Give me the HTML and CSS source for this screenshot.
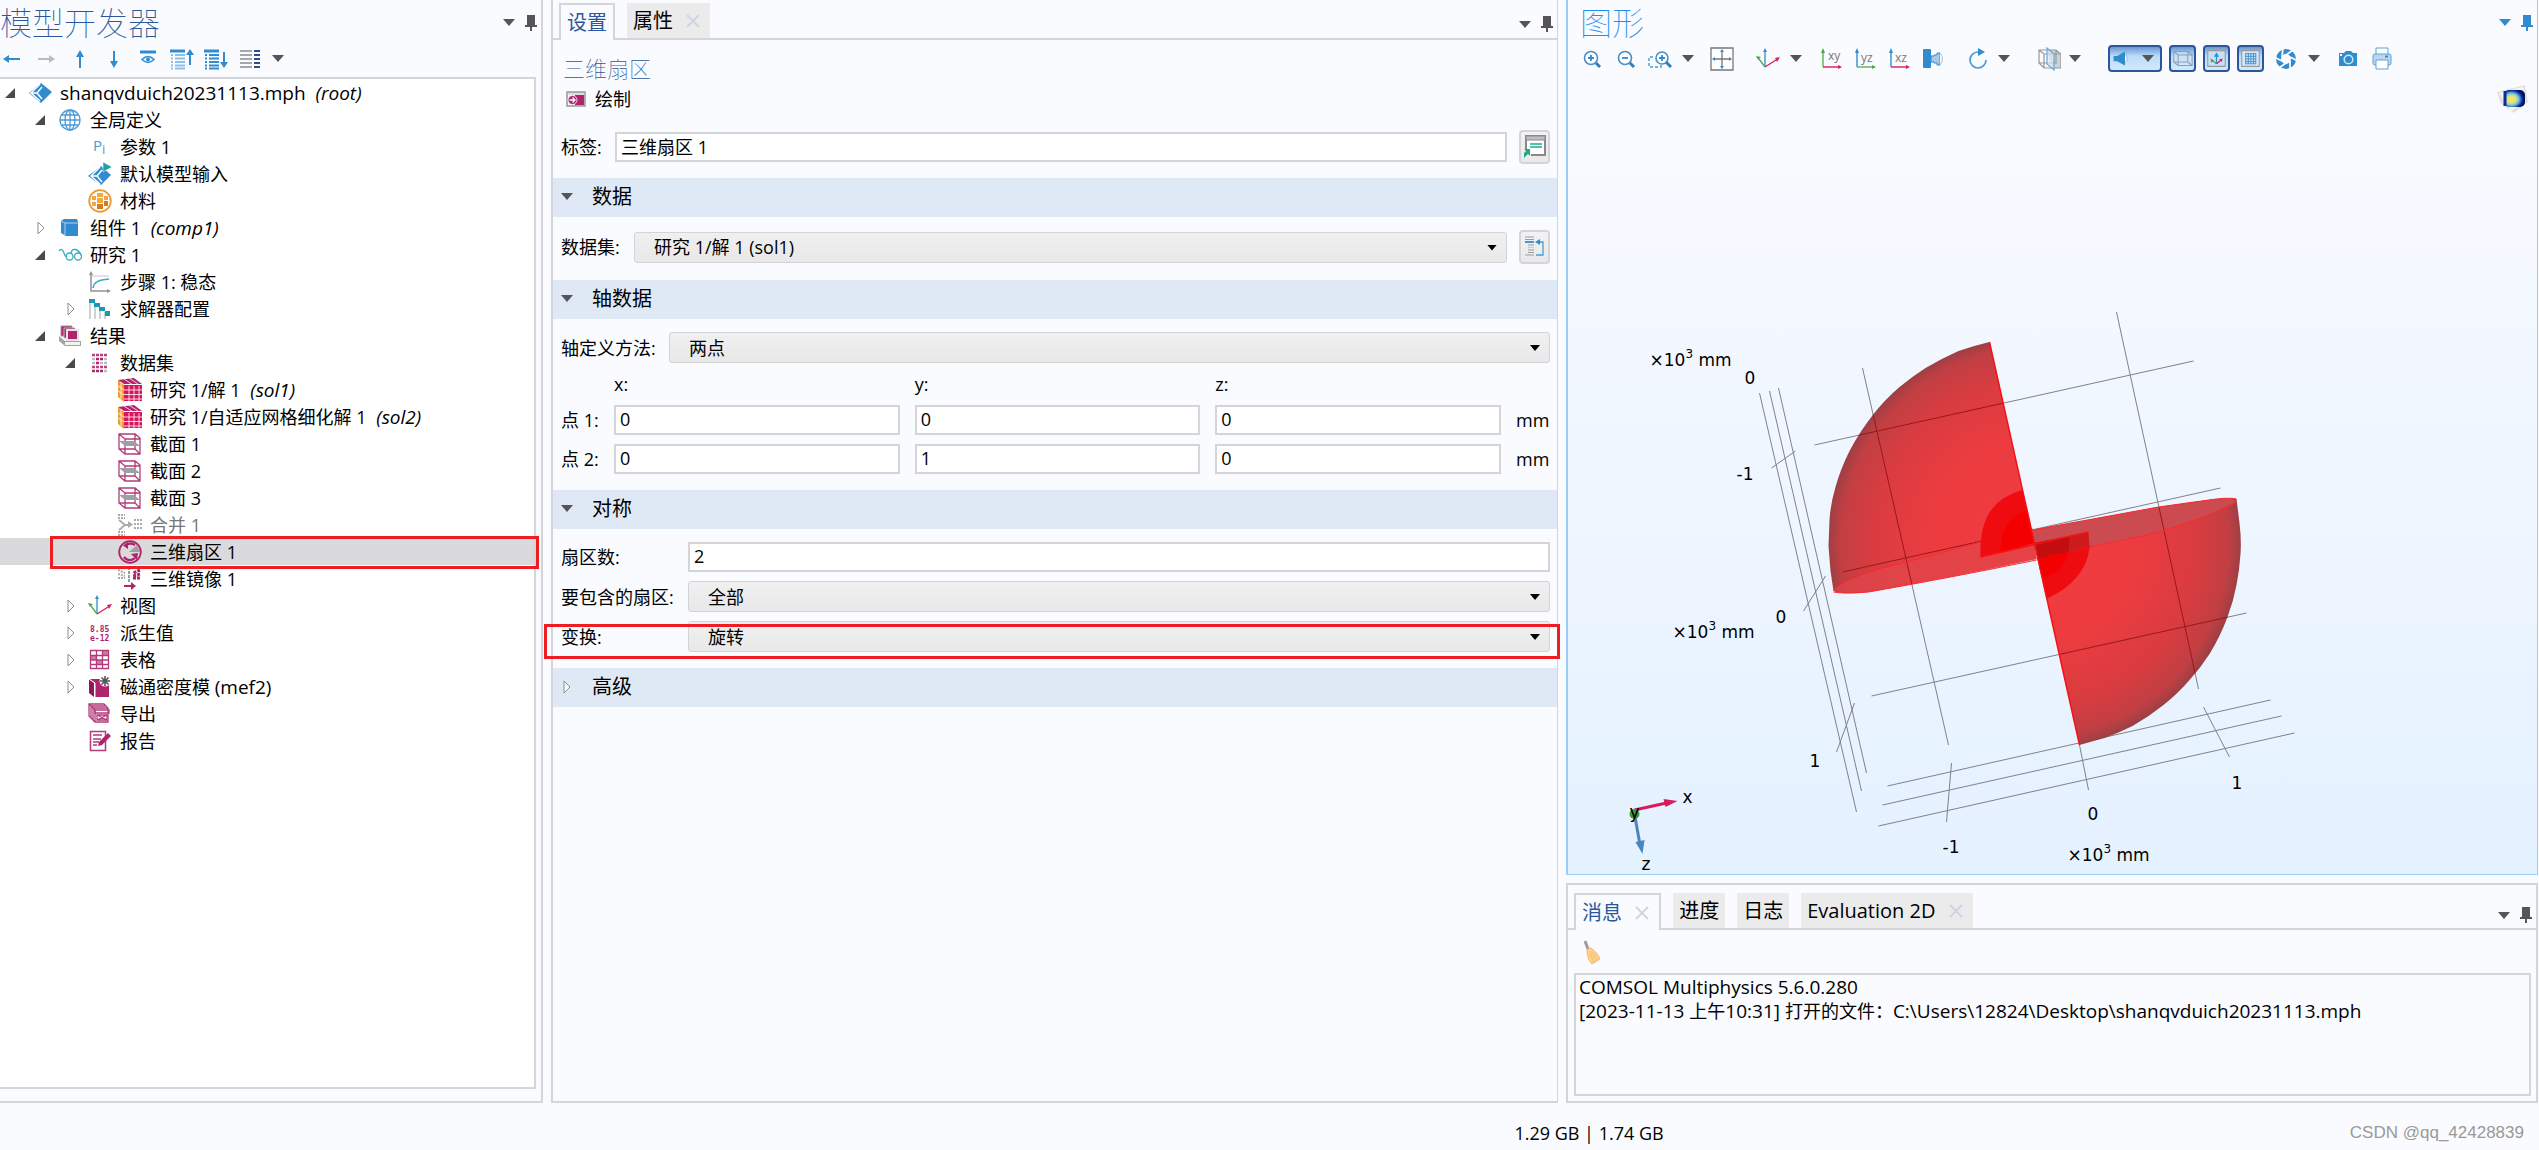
FILE: index.html
```html
<!DOCTYPE html>
<html lang="zh-CN">
<head>
<meta charset="utf-8">
<title>COMSOL Multiphysics</title>
<link rel="stylesheet" href="styles.css">
</head>
<body>
<svg class="sprite" aria-hidden="true">
  <defs>
    <symbol id="pin" viewBox="0 0 12 16"><path d="M2 0h8v10h2v2H7v4H5v-4H0v-2h2z" fill="currentColor"/></symbol>
    <symbol id="caret" viewBox="0 0 12 7"><path d="M0 0h12L6 7z" fill="currentColor"/></symbol>
    <symbol id="close" viewBox="0 0 14 14"><path d="M1 1l12 12M13 1L1 13" stroke="currentColor" stroke-width="2" fill="none"/></symbol>
    <symbol id="open" viewBox="0 0 10 10"><path d="M10 0v10H0z" fill="#4a4a4a"/></symbol>
    <symbol id="shut" viewBox="0 0 8 14"><path d="M1 1v12l6-6z" fill="#fff" stroke="#8c8c8c" stroke-width="1"/></symbol>

    <symbol id="t-back" viewBox="0 0 24 24"><path d="M5 12h15" stroke="#318ccf" stroke-width="2"/><path d="M3 12l6-4v8z" fill="#318ccf"/></symbol>
    <symbol id="t-fwd" viewBox="0 0 24 24"><path d="M4 12h13" stroke="#b9bbbf" stroke-width="2"/><path d="M21 12l-6-4v8z" fill="#b9bbbf"/></symbol>
    <symbol id="t-up" viewBox="0 0 24 24"><path d="M12 6v15" stroke="#318ccf" stroke-width="2"/><path d="M12 3l4 7H8z" fill="#318ccf"/></symbol>
    <symbol id="t-down" viewBox="0 0 24 24"><path d="M12 4v14" stroke="#318ccf" stroke-width="2"/><path d="M12 21l4-7H8z" fill="#318ccf"/></symbol>
    <symbol id="t-eye" viewBox="0 0 24 24"><path d="M4 5h16" stroke="#318ccf" stroke-width="3"/><path d="M6 12.500q6-6 12 0q-6 6-12 0z" fill="none" stroke="#318ccf" stroke-width="1.500"/><circle cx="12" cy="12.500" r="2" fill="#318ccf"/></symbol>
    <symbol id="t-listup" viewBox="0 0 24 24"><path d="M0 4h15" stroke="#318ccf" stroke-width="3"/><path d="M1 8h2m2 0h10M1 11.500h2m2 0h10M1 15h2m2 0h10M1 18.500h2m2 0h10M1 21.500h2m2 0h10" stroke="#8dc0e6" stroke-width="2"/><path d="M20 6v12" stroke="#318ccf" stroke-width="2"/><path d="M20 2l4 6h-8z" fill="#318ccf"/></symbol>
    <symbol id="t-listdown" viewBox="0 0 24 24"><path d="M0 4h15" stroke="#318ccf" stroke-width="3"/><path d="M1 8h2m2 0h10M1 11.500h2m2 0h10M1 15h2m2 0h10M1 18.500h2m2 0h10M1 21.500h2m2 0h10" stroke="#318ccf" stroke-width="2"/><path d="M20 5v12" stroke="#318ccf" stroke-width="2"/><path d="M20 21l4-6h-8z" fill="#318ccf"/></symbol>
    <symbol id="t-cols" viewBox="0 0 24 24"><path d="M2 4h12M2 8h12M2 12h12M2 16h12M2 20h12" stroke="#a5a7ab" stroke-width="2"/><path d="M16 4h6M16 8h6M16 12h6M16 16h6M16 20h6" stroke="#2c4f86" stroke-width="2"/></symbol>

    <symbol id="i-root" viewBox="0 0 24 24"><path d="M13 2l11 9-11 11L1 12z" fill="#318ccf"/><path d="M12 3L3 12l9 8M3 12h6l5-6M9 12l5 6" fill="none" stroke="#fff" stroke-width="1.500"/></symbol>
    <symbol id="i-globe" viewBox="0 0 24 24"><g fill="none" stroke="#4b9ad5" stroke-width="1.300"><circle cx="12" cy="12" r="10"/><ellipse cx="12" cy="12" rx="5" ry="10"/><path d="M12 2v20M2 12h20M4 7h16M4 17h16"/></g></symbol>
    <symbol id="i-pi" viewBox="0 0 24 24"><text x="5" y="16" font-size="15" font-family="Open Sans, sans-serif" fill="#4b9ad5">P</text><text x="14" y="19" font-size="13" font-family="Open Sans, sans-serif" fill="#4b9ad5">i</text></symbol>
    <symbol id="i-input" viewBox="0 0 24 24"><path d="M13 4l10 9-10 10L0 14z" fill="#318ccf"/><path d="M12 5l-9 9 9 8M3 14h6l5-6M9 14l5 6" fill="none" stroke="#fff" stroke-width="1.500"/><path d="M15 0l9 5-9 5z" fill="#1fa1a8" stroke="#fff" stroke-width=".5"/></symbol>
    <symbol id="i-mat" viewBox="0 0 24 24"><circle cx="12" cy="12" r="10.800" fill="#fffaf2" stroke="#eb9c3a" stroke-width="1.800"/><path d="M9 4h6v4H9zM4 7h4v4H4zM16 7h4v4h-4zM9 9h6v5H9zM4 13h4v4H4z" fill="#f2a645"/><path d="M16 12h4v5h-4zM9 15h6v5H9z" fill="#cf7d1e"/></symbol>
    <symbol id="i-comp" viewBox="0 0 24 24"><path d="M3 5l3-2h13l1 3v14H8l-5-3z" fill="#318ccf"/><path d="M3 5l4 2h13M7 7v12" stroke="#a9d0ef" stroke-width="1" fill="none"/></symbol>
    <symbol id="i-study" viewBox="0 0 24 24"><g fill="none" stroke="#35aebf" stroke-width="1.300"><path d="M1 8c2-3 4-1 5 2s2 4 3 3"/><circle cx="11.500" cy="13.500" r="3.500"/><circle cx="20" cy="13.500" r="3.500"/><path d="M13 10c1-5 7-5 10 2"/></g></symbol>
    <symbol id="i-step" viewBox="0 0 24 24"><path d="M3 3v18h18" stroke="#8f9195" stroke-width="1.500" fill="none"/><path d="M3 1l2 4H1zM23 21l-4-2v4z" fill="#8f9195"/><path d="M3 6h18" stroke="#c5c7ca" stroke-width="1"/><path d="M5 18c1-6 5-8 16-9" stroke="#35aebf" stroke-width="1.500" fill="none"/></symbol>
    <symbol id="i-solver" viewBox="0 0 24 24"><path d="M2 6v16M7 6v16M12 11v11M17 15v7" stroke="#c0c2c5" stroke-width="1.500"/><path d="M1 2h6v4H1zM6 6h6v4H6zM11 10h6v4h-6zM17 14h5v5h-5z" fill="#1b98b5"/></symbol>
    <symbol id="i-results" viewBox="0 0 24 24"><path d="M3 2h11v10H3z" fill="#b0246b" stroke="#9a9a9a"/><path d="M6 4h11v10H6z" fill="#b0246b" stroke="#b9b9b9"/><path d="M9 6h11v10H9z" fill="#b0246b" stroke="#e4e4e4" stroke-width="2"/><path d="M1 12l6 5h16v5H7l-6-5z" fill="#a2a4a6"/><path d="M7 18h15v3H7z" fill="#f2f2f2"/></symbol>
    <symbol id="i-data" viewBox="0 0 24 24"><g stroke-width="2.500" fill="none"><path d="M4 4h3m1 0h3m1 0h3m1 0h3M4 16h3m1 0h3m1 0h3m1 0h3" stroke="#b3447f"/><path d="M8 8h3m1 0h3M8 12h3M4 20h3m1 0h3m1 0h3" stroke="#b0246b"/><path d="M4 8h3m9 0h3M4 12h3m5 0h3m1 0h3M16 20h3" stroke="#b9bbbd"/></g></symbol>
    <symbol id="i-sol" viewBox="0 0 24 24"><path d="M0 2l6 5v17l-6-5z" fill="#f39a2c"/><path d="M0 2l16-2 8 6H6z" fill="#b0246b"/><path d="M6 7h18v16H6z" fill="#d8145c"/><path d="M0 8l6 4M0 13l6 4M3 4v17M11 8v15M16 8v15M21 8v15M6 12h18M6 16.500h18M6 21h18M6 1l9 6M11 0l9 6" stroke="#fff" stroke-width=".8"/></symbol>
    <symbol id="i-cut" viewBox="0 0 24 24"><g fill="none" stroke="#b23c7b" stroke-width="1.300"><path d="M1 2h16l5 4v16H7l-6-5zM1 2l6 5M17 2v15M7 7h15M7 7v15M1 17h16l5 5"/></g><path d="M1 9h15l6 5H7z" fill="#9ea0a2"/></symbol>
    <symbol id="i-join" viewBox="0 0 24 24"><path d="M0 2h7M0 5h7M0 19h7M0 22h7M16 7h8M16 11h8M16 15h8" stroke="#a9abad" stroke-width="2" stroke-dasharray="2 1"/><path d="M1 7l6 5h4M1 17l6-5" stroke="#a9abad" stroke-width="1.800" fill="none"/><path d="M15 11.500l-5-3.500v7z" fill="#a9abad"/></symbol>
    <symbol id="i-sector" viewBox="0 0 24 24"><circle cx="12" cy="12" r="10.800" fill="none" stroke="#b0246b" stroke-width="1.800"/><path d="M11 12l8-7 3 7z" fill="#9ea0a2"/><path d="M17 5a8 8 0 0 0-9 0M6 17c3 4 8 4 11 1" fill="none" stroke="#b0246b" stroke-width="2.400"/><path d="M10 2v7L5 5.500zM13 14l7-1-1 7z" fill="#b0246b"/></symbol>
    <symbol id="i-mirror" viewBox="0 0 24 24"><path d="M0 3l7 3M0 7l7 2M0 11h7" stroke="#a9abad" stroke-width="2" stroke-dasharray="2 1"/><path d="M11 0v15" stroke="#77797b" stroke-width="1.500" stroke-dasharray="3 1"/><path d="M22 3l-7 3M22 7l-7 2M22 11h-7" stroke="#b0246b" stroke-width="3" stroke-dasharray="3 1"/><path d="M6 19h8" stroke="#b0246b" stroke-width="2"/><path d="M18 19l-5-4v8z" fill="#b0246b"/></symbol>
    <symbol id="i-view" viewBox="0 0 24 24"><g fill="none" stroke-width="1.300"><path d="M9 20V4" stroke="#318ccf"/><path d="M9 20l11-7" stroke="#d81b5c"/><path d="M9 20L3 12" stroke="#4aa84a"/></g><path d="M9 1l2 4H7z" fill="#318ccf"/><path d="M24 10l-5 1 2 4z" fill="#d81b5c"/><path d="M0 9l5 1-3 3z" fill="#4aa84a"/></symbol>
    <symbol id="i-derived" viewBox="0 0 24 24"><text x="2" y="11" font-size="8" font-weight="bold" font-family="DejaVu Sans Mono, monospace" fill="#b0246b">8.85</text><text x="2" y="20" font-size="8" font-weight="bold" font-family="DejaVu Sans Mono, monospace" fill="#b0246b">e-12</text></symbol>
    <symbol id="i-table" viewBox="0 0 24 24"><path d="M15 3h6v5h-6zM3 8h6v4H3zM9 12h6v5H9z" fill="#cf7ba5"/><path d="M2.500 2.500h18v18h-18zM2.500 7.500h18M2.500 12h18M2.500 16.500h18M8.500 2.500v18M14.500 2.500v18" fill="none" stroke="#b23c7b" stroke-width="1.300"/></symbol>
    <symbol id="i-flux" viewBox="0 0 24 24"><path d="M1 4l5 4v14l-5-4z" fill="#8c1b55"/><path d="M1 4h12l2 4h6v14H7V8z" fill="#b0246b"/><path d="M1 4l6 4v14" fill="none" stroke="#fff"/><circle cx="17" cy="6" r="5.500" fill="#fff"/><path d="M17 1v10M12 6h10M13.500 2.500l7 7M20.500 2.500l-7 7" stroke="#555" stroke-width="1.600"/></symbol>
    <symbol id="i-export" viewBox="0 0 24 24"><g fill="none" stroke="#b23c7b" stroke-width="1.300"><path d="M1 2h15l4 4v14H7l-6-6zM3 4h14M5 6h15M1 2l6 6v12M3 4v12M5 6v12"/><path d="M7 8h14v3H7zM9 13l10 5M9 18l10-5M9 13h10v5H9z"/></g></symbol>
    <symbol id="i-report" viewBox="0 0 24 24"><path d="M2.500 2.500h15v19h-15z" fill="#fff" stroke="#b23c7b" stroke-width="1.500"/><path d="M5 6h9M5 10h8M5 13h6M5 16h4" stroke="#b23c7b" stroke-width="1.300"/><path d="M20 4l3 3-9 9-4 1 1-4z" fill="#b0246b"/></symbol>

    <symbol id="i-plot" viewBox="0 0 20 16"><path d="M1 1h18v14H1z" fill="#ddd" stroke="#97999b" stroke-width="1.500"/><path d="M2 4h16v10H2z" fill="#fff"/><path d="M9 4h9v10H9z" fill="#b0246b"/><circle cx="6.500" cy="9" r="4.500" fill="#b0246b" stroke="#fff" stroke-width=".8"/><path d="M3.500 9h5M6.500 6.500L9 9l-2.500 2.500" stroke="#fff" fill="none" stroke-width="1.300"/></symbol>
    <symbol id="i-goto" viewBox="0 0 24 24"><path d="M3 2h19v19H3z" fill="#fff" stroke="#88898d" stroke-width="2"/><path d="M3 2h19v4H3z" fill="#bfc0c4" stroke="#88898d"/><path d="M7 10h12M7 13h12" stroke="#1fa88c" stroke-width="1.600"/><path d="M0 15h8v8H0z" fill="#f2f2f2"/><path d="M1 15h6v7l-2-2-4 4v-5l2-2z" fill="#1fa88c"/></symbol>
    <symbol id="i-source" viewBox="0 0 24 24"><path d="M2 3h9M2 5.500h9M5 11h6M5 16h6M5 18.500h6M2 21h9" stroke="#9b9da0" stroke-width="1.200"/><path d="M2 8h9" stroke="#318ccf" stroke-width="1.800"/><path d="M5 13.500h6" stroke="#ccc" stroke-width="1.200"/><path d="M14 8h6v13h-7" fill="none" stroke="#4b9ad5" stroke-width="1.300"/><path d="M12 8l5-3v6z" fill="#318ccf"/></symbol>

    <symbol id="g-in" viewBox="0 0 24 24"><circle cx="11" cy="11" r="6.500" fill="#fff" stroke="#4b8fc9" stroke-width="1.600"/><path d="M8 11h6M11 8v6" stroke="#318ccf" stroke-width="1.800"/><path d="M16 16l4 4" stroke="#2f7fbf" stroke-width="3"/></symbol>
    <symbol id="g-out" viewBox="0 0 24 24"><circle cx="11" cy="11" r="6.500" fill="#fff" stroke="#4b8fc9" stroke-width="1.600"/><path d="M8 11h6" stroke="#318ccf" stroke-width="1.800"/><path d="M16 16l4 4" stroke="#2f7fbf" stroke-width="3"/></symbol>
    <symbol id="g-box" viewBox="0 0 24 24"><path d="M5 10H1v10h12v-3" fill="none" stroke="#4b9ad5" stroke-width="1.400" stroke-dasharray="3 2"/><circle cx="14" cy="11" r="6" fill="#fff" stroke="#4b8fc9" stroke-width="1.600"/><path d="M11 11h6M14 8v6" stroke="#318ccf" stroke-width="1.800"/><path d="M18 15l5 5" stroke="#2f7fbf" stroke-width="3"/></symbol>
    <symbol id="g-fit" viewBox="0 0 24 24"><path d="M1 1h22v22H1z" fill="#fff" stroke="#777" stroke-width="1.300"/><path d="M12 3v18M3 12h18" stroke="#777" stroke-width="1.300"/><path d="M12 2l2 3h-4zM12 22l2-3h-4zM2 12l3-2v4zM22 12l-3-2v4z" fill="#318ccf"/></symbol>
    <symbol id="g-xy" viewBox="0 0 24 24"><path d="M5 20V4" stroke="#5cb04e" stroke-width="1.400"/><path d="M5 20h16" stroke="#d81b5c" stroke-width="1.400"/><path d="M5 1l2 5H3z" fill="#4aa84a"/><path d="M24 20l-4-2v4z" fill="#d81b5c"/><text x="10" y="13" font-size="12" font-family="Open Sans, sans-serif" fill="#777">xy</text></symbol>
    <symbol id="g-yz" viewBox="0 0 24 24"><path d="M5 20V4" stroke="#318ccf" stroke-width="1.400"/><path d="M5 20h16" stroke="#5cb04e" stroke-width="1.400"/><path d="M5 1l2 5H3z" fill="#318ccf"/><path d="M24 20l-4-2v4z" fill="#4aa84a"/><text x="9" y="15" font-size="12" font-family="Open Sans, sans-serif" fill="#777">yz</text></symbol>
    <symbol id="g-xz" viewBox="0 0 24 24"><path d="M5 20V4" stroke="#318ccf" stroke-width="1.400"/><path d="M5 20h16" stroke="#d81b5c" stroke-width="1.400"/><path d="M5 1l2 5H3z" fill="#318ccf"/><path d="M24 20l-4-2v4z" fill="#d81b5c"/><text x="9" y="15" font-size="12" font-family="Open Sans, sans-serif" fill="#777">xz</text></symbol>
    <symbol id="g-cam" viewBox="0 0 24 24"><rect x="3" y="2" width="8" height="19" rx="1" fill="#318ccf"/><path d="M11 9h3V8h3V6h3v12h-3v-2h-3v-1h-3z" fill="#aac9e8" stroke="#318ccf"/><path d="M20 6q5 6 0 12" fill="#fff" stroke="#9cc4e6"/></symbol>
    <symbol id="g-rot" viewBox="0 0 24 24"><path d="M12 5a8 8 0 1 0 8 8" fill="none" stroke="#4b9ad5" stroke-width="1.700"/><path d="M12 1l7 4-7 4z" fill="#318ccf"/></symbol>
    <symbol id="g-cube" viewBox="0 0 24 24"><path d="M10 3h9l5 4v14h-9z" fill="#cfd1d4"/><path d="M2 3h17l5 4v14H7l-5-5zM2 3l5 4h17M7 7v14M2 16h17V3" fill="none" stroke="#999" stroke-width="1.200"/><path d="M10 1l7 6v16l-7-6z" fill="#dbeaf8" fill-opacity=".6" stroke="#65a9da" stroke-width="1.200"/></symbol>
    <symbol id="g-light" viewBox="0 0 24 24"><path d="M3 9h4l9-5v16l-9-5H3z" fill="#318ccf"/><path d="M16 7q5 5 0 10" fill="#fff" stroke="#7db3df"/></symbol>
    <symbol id="g-wire" viewBox="0 0 24 24"><path d="M2 4h16l5 4v12H7l-5-4z" fill="#d5e6f7" fill-opacity=".6" stroke="#8b9fb6" stroke-width="1.200"/><path d="M2 4l5 4h16M7 8v12M2 16h16V4M18 16l5 4" fill="none" stroke="#8b9fb6" stroke-width="1.200"/></symbol>
    <symbol id="g-axes" viewBox="0 0 24 24"><path d="M2 3h20v18H2z" fill="#c5e0f7" stroke="#999" stroke-width="1.200"/><path d="M12 18V9" stroke="#318ccf" stroke-width="1.400"/><path d="M12 5l3 5H9z" fill="#318ccf"/><path d="M12 18l5-4" stroke="#d81b5c" stroke-width="1.400"/><path d="M19 12l-4 1 3 3z" fill="#d81b5c"/><path d="M12 18l-5-4" stroke="#4aa84a" stroke-width="1.400"/><path d="M5 12l1 5 3-3z" fill="#4aa84a"/></symbol>
    <symbol id="g-grid" viewBox="0 0 24 24"><path d="M2 3h20v18H2z" fill="#d3e8f9" stroke="#999" stroke-width="1.200"/><path d="M6 6.500h12M6 9.500h12M6 12.500h12M6 15.500h12M6 18h12M6.500 6v12M9.500 6v12M12.500 6v12M15.500 6v12M18 6v12" stroke="#318ccf" stroke-width="1"/></symbol>
    <symbol id="g-aper" viewBox="0 0 24 24"><circle cx="12" cy="12" r="7.500" fill="none" stroke="#318ccf" stroke-width="5"/><path d="M9 1l-1 9M19 3l-7 5M24 14l-8-4M16 23l0-9M5 21l7-5M0 10l8 4" stroke="#fafbff" stroke-width="1.800"/></symbol>
    <symbol id="g-photo" viewBox="0 0 24 24"><path d="M3 6h5l2-2h5l2 2h4v13H3z" fill="#318ccf"/><circle cx="12.500" cy="12.500" r="4.300" fill="none" stroke="#cfe4f5" stroke-width="1.600"/><path d="M4 7h2v2H4z" fill="#fff"/></symbol>
    <symbol id="g-print" viewBox="0 0 24 24"><path d="M6 1h12v7H6z" fill="#fff" stroke="#5ba3d8"/><rect x="3" y="7" width="18" height="11" rx="2" fill="#bed7ef" stroke="#5ba3d8"/><path d="M6 13h12v9H6z" fill="#fff" stroke="#5ba3d8"/><path d="M15 9.500h3" stroke="#318ccf" stroke-width="2"/></symbol>
    <symbol id="broom" viewBox="0 0 24 24"><path d="M5 1l3 8" stroke="#9a9ca0" stroke-width="3"/><path d="M7 9l4-1c4 3 7 6 9 11l-8 5c-4-4-5-9-5-15z" fill="#fdd08b" stroke="#f2ae55" stroke-width=".8"/><path d="M10 14l4 8M12 12l5 8" stroke="#f2b764" stroke-width=".8"/></symbol>
    <symbol id="logo" viewBox="0 0 34 30"><path d="M1 8l28-7 3 17-14 11L5 20z" fill="#e3e2e0"/><path d="M3 9l12 18 15-9L27 3z" fill="#f7f6f5"/><rect x="8" y="6" width="21" height="17" rx="5" fill="url(#lg)"/><path d="M9 7v15" stroke="#0a2ea0" stroke-width="3"/></symbol>
    <radialGradient id="lg" cx=".35" cy=".55" r=".6"><stop offset="0" stop-color="#f3e85a"/><stop offset=".35" stop-color="#e6e27c"/><stop offset=".6" stop-color="#6fc0e4"/><stop offset=".85" stop-color="#0b3aa6"/><stop offset="1" stop-color="#03105e"/></radialGradient>
  </defs>
</svg>

<main class="workspace">
  <section class="panel builder">
    <header class="panel-head">
      <h1 class="panel-title">模型开发器</h1>
      <div class="panel-tools">
        <button class="bare" aria-label="菜单"><svg class="caret"><use href="#caret"/></svg></button>
        <button class="bare" aria-label="固定"><svg class="pin"><use href="#pin"/></svg></button>
      </div>
    </header>
    <div class="toolbar">
      <button class="bare" aria-label="后退"><svg class="ico"><use href="#t-back"/></svg></button>
      <button class="bare" aria-label="前进"><svg class="ico"><use href="#t-fwd"/></svg></button>
      <button class="bare" aria-label="上移"><svg class="ico"><use href="#t-up"/></svg></button>
      <button class="bare" aria-label="下移"><svg class="ico"><use href="#t-down"/></svg></button>
      <button class="bare" aria-label="显示"><svg class="ico"><use href="#t-eye"/></svg></button>
      <button class="bare" aria-label="折叠"><svg class="ico"><use href="#t-listup"/></svg></button>
      <button class="bare" aria-label="展开"><svg class="ico"><use href="#t-listdown"/></svg></button>
      <button class="bare" aria-label="列"><svg class="ico"><use href="#t-cols"/></svg></button>
      <button class="bare" aria-label="更多"><svg class="caret"><use href="#caret"/></svg></button>
    </div>
    <ul class="tree">
      <li class="node"><span class="twist"><svg class="open"><use href="#open"/></svg></span><svg class="ico"><use href="#i-root"/></svg><span class="latin">shanqvduich20231113.mph <em>(root)</em></span></li>
      <li class="node l1"><span class="twist"><svg class="open"><use href="#open"/></svg></span><svg class="ico"><use href="#i-globe"/></svg><span>全局定义</span></li>
      <li class="node l2"><span class="twist"></span><svg class="ico"><use href="#i-pi"/></svg><span>参数 1</span></li>
      <li class="node l2"><span class="twist"></span><svg class="ico"><use href="#i-input"/></svg><span>默认模型输入</span></li>
      <li class="node l2"><span class="twist"></span><svg class="ico"><use href="#i-mat"/></svg><span>材料</span></li>
      <li class="node l1"><span class="twist"><svg class="shut"><use href="#shut"/></svg></span><svg class="ico"><use href="#i-comp"/></svg><span>组件 1 <em>(comp1)</em></span></li>
      <li class="node l1"><span class="twist"><svg class="open"><use href="#open"/></svg></span><svg class="ico"><use href="#i-study"/></svg><span>研究 1</span></li>
      <li class="node l2"><span class="twist"></span><svg class="ico"><use href="#i-step"/></svg><span>步骤 1: 稳态</span></li>
      <li class="node l2"><span class="twist"><svg class="shut"><use href="#shut"/></svg></span><svg class="ico"><use href="#i-solver"/></svg><span>求解器配置</span></li>
      <li class="node l1"><span class="twist"><svg class="open"><use href="#open"/></svg></span><svg class="ico"><use href="#i-results"/></svg><span>结果</span></li>
      <li class="node l2"><span class="twist"><svg class="open"><use href="#open"/></svg></span><svg class="ico"><use href="#i-data"/></svg><span>数据集</span></li>
      <li class="node l3"><span class="twist"></span><svg class="ico"><use href="#i-sol"/></svg><span>研究 1/解 1 <em>(sol1)</em></span></li>
      <li class="node l3"><span class="twist"></span><svg class="ico"><use href="#i-sol"/></svg><span>研究 1/自适应网格细化解 1 <em>(sol2)</em></span></li>
      <li class="node l3"><span class="twist"></span><svg class="ico"><use href="#i-cut"/></svg><span>截面 1</span></li>
      <li class="node l3"><span class="twist"></span><svg class="ico"><use href="#i-cut"/></svg><span>截面 2</span></li>
      <li class="node l3"><span class="twist"></span><svg class="ico"><use href="#i-cut"/></svg><span>截面 3</span></li>
      <li class="node l3 off"><span class="twist"></span><svg class="ico"><use href="#i-join"/></svg><span>合并 1</span></li>
      <li class="node l3 selected"><span class="twist"></span><svg class="ico"><use href="#i-sector"/></svg><span>三维扇区 1</span></li>
      <li class="node l3"><span class="twist"></span><svg class="ico"><use href="#i-mirror"/></svg><span>三维镜像 1</span></li>
      <li class="node l2"><span class="twist"><svg class="shut"><use href="#shut"/></svg></span><svg class="ico"><use href="#i-view"/></svg><span>视图</span></li>
      <li class="node l2"><span class="twist"><svg class="shut"><use href="#shut"/></svg></span><svg class="ico"><use href="#i-derived"/></svg><span>派生值</span></li>
      <li class="node l2"><span class="twist"><svg class="shut"><use href="#shut"/></svg></span><svg class="ico"><use href="#i-table"/></svg><span>表格</span></li>
      <li class="node l2"><span class="twist"><svg class="shut"><use href="#shut"/></svg></span><svg class="ico"><use href="#i-flux"/></svg><span>磁通密度模 <span class="latin">(mef2)</span></span></li>
      <li class="node l2"><span class="twist"></span><svg class="ico"><use href="#i-export"/></svg><span>导出</span></li>
      <li class="node l2"><span class="twist"></span><svg class="ico"><use href="#i-report"/></svg><span>报告</span></li>
    </ul>
  </section>

  <section class="panel settings">
    <div class="tabs">
      <button class="tab active">设置</button>
      <button class="tab">属性 <svg class="close"><use href="#close"/></svg></button>
      <div class="panel-tools">
        <button class="bare" aria-label="菜单"><svg class="caret"><use href="#caret"/></svg></button>
        <button class="bare" aria-label="固定"><svg class="pin"><use href="#pin"/></svg></button>
      </div>
    </div>
    <h2 class="node-title">三维扇区</h2>
    <button class="bare plot"><svg class="plot-icon"><use href="#i-plot"/></svg>绘制</button>
    <div class="row label-row">
      <label for="name">标签:</label>
      <input class="field grow" id="name" type="text" value="三维扇区 1">
      <button class="square" aria-label="转到"><svg class="ico"><use href="#i-goto"/></svg></button>
    </div>

    <h3 class="section"><svg class="caret"><use href="#caret"/></svg>数据</h3>
    <div class="row data-row">
      <label for="dataset">数据集:</label>
      <span class="picker grow"><select id="dataset"><option>研究 1/解 1 (sol1)</option></select></span>
      <button class="square" aria-label="转到源"><svg class="ico"><use href="#i-source"/></svg></button>
    </div>

    <h3 class="section"><svg class="caret"><use href="#caret"/></svg>轴数据</h3>
    <div class="row axis-row">
      <label for="axis">轴定义方法:</label>
      <span class="picker grow"><select id="axis"><option>两点</option></select></span>
    </div>
    <div class="points">
      <span></span><span>x:</span><span>y:</span><span>z:</span><span></span>
      <label for="p1x">点 1:</label>
      <input class="field" id="p1x" type="text" value="0">
      <input class="field" aria-label="点 1 y" type="text" value="0">
      <input class="field" aria-label="点 1 z" type="text" value="0">
      <span class="unit">mm</span>
      <label for="p2x">点 2:</label>
      <input class="field" id="p2x" type="text" value="0">
      <input class="field" aria-label="点 2 y" type="text" value="1">
      <input class="field" aria-label="点 2 z" type="text" value="0">
      <span class="unit">mm</span>
    </div>

    <h3 class="section"><svg class="caret"><use href="#caret"/></svg>对称</h3>
    <div class="symmetry">
      <div class="row"><label for="count">扇区数:</label><input class="field grow" id="count" type="text" value="2"></div>
      <div class="row"><label for="include">要包含的扇区:</label><span class="picker grow"><select id="include"><option>全部</option></select></span></div>
      <div class="row marked"><label for="transform">变换:</label><span class="picker grow"><select id="transform"><option>旋转</option></select></span></div>
    </div>

    <h3 class="section"><svg class="shut"><use href="#shut"/></svg>高级</h3>
  </section>

  <div class="side">
    <section class="panel graphics">
      <header class="panel-head">
        <h1 class="panel-title">图形</h1>
        <div class="panel-tools">
          <button class="bare" aria-label="菜单"><svg class="caret"><use href="#caret"/></svg></button>
          <button class="bare" aria-label="固定"><svg class="pin"><use href="#pin"/></svg></button>
        </div>
      </header>
      <div class="toolbar">
        <button class="bare" aria-label="放大"><svg class="ico"><use href="#g-in"/></svg></button>
        <button class="bare" aria-label="缩小"><svg class="ico"><use href="#g-out"/></svg></button>
        <button class="bare split" aria-label="框选缩放"><svg class="ico"><use href="#g-box"/></svg><svg class="caret"><use href="#caret"/></svg></button>
        <button class="bare wide" aria-label="缩放到窗口大小"><svg class="ico"><use href="#g-fit"/></svg></button>
        <button class="bare split" aria-label="默认视图"><svg class="ico"><use href="#i-view"/></svg><svg class="caret"><use href="#caret"/></svg></button>
        <button class="bare" aria-label="xy 视图"><svg class="ico"><use href="#g-xy"/></svg></button>
        <button class="bare" aria-label="yz 视图"><svg class="ico"><use href="#g-yz"/></svg></button>
        <button class="bare" aria-label="xz 视图"><svg class="ico"><use href="#g-xz"/></svg></button>
        <button class="bare wide" aria-label="相机"><svg class="ico"><use href="#g-cam"/></svg></button>
        <button class="bare split far" aria-label="旋转"><svg class="ico"><use href="#g-rot"/></svg><svg class="caret"><use href="#caret"/></svg></button>
        <button class="bare split far" aria-label="裁剪"><svg class="ico"><use href="#g-cube"/></svg><svg class="caret"><use href="#caret"/></svg></button>
        <div class="toggles">
          <button class="toggle" aria-label="场景光"><svg class="ico"><use href="#g-light"/></svg><svg class="caret"><use href="#caret"/></svg></button>
          <button class="toggle" aria-label="透明"><svg class="ico"><use href="#g-wire"/></svg></button>
          <button class="toggle" aria-label="坐标轴"><svg class="ico"><use href="#g-axes"/></svg></button>
          <button class="toggle" aria-label="栅格"><svg class="ico"><use href="#g-grid"/></svg></button>
        </div>
        <button class="bare split" aria-label="渲染"><svg class="ico"><use href="#g-aper"/></svg><svg class="caret"><use href="#caret"/></svg></button>
        <button class="bare" aria-label="快照"><svg class="ico"><use href="#g-photo"/></svg></button>
        <button class="bare" aria-label="打印"><svg class="ico"><use href="#g-print"/></svg></button>
      </div>
      <div class="canvas">
        <svg class="logo"><use href="#logo"/></svg>
        <svg class="plot3d" viewBox="0 0 968 794" preserveAspectRatio="xMidYMax meet" role="img" aria-label="三维扇区">
          <defs>
            <radialGradient id="shade" gradientUnits="userSpaceOnUse" cx="466" cy="463" r="209">
              <stop offset="0" stop-color="#f03b3f"/><stop offset=".5" stop-color="#ec3c40"/><stop offset=".78" stop-color="#d93c40"/><stop offset=".93" stop-color="#c13f43"/><stop offset="1" stop-color="#963f43"/>
            </radialGradient>
            <path id="secA" d="M421 262Q404 266 390 271Q372 279 357 288Q343 297 331 307Q317 319 305 334Q291 352 281 371Q272 389 267 407Q262 424 261 440L260 466L262 491L265 511Q274 515 300 512Q380 498 468 479L466 463Z"/>
            <path id="secB" d="M464 450L519 440L590 427L640 420Q659 417 668 419L671 443Q673 459 672 474Q671 490 668 505Q665 521 659 537Q652 556 641 574Q632 588 621 600Q609 614 595 625Q580 637 564 646Q550 653 536 658L511 665L466 463Z"/>
            <clipPath id="inside"><use href="#secA"/><use href="#secB"/></clipPath>
            <path id="gridlines" d="M548 232L630 609M294 288L380 665M246 365L625 281M274 492L652 408M303 616L678 533"/>
          </defs>
          <g fill="none" stroke="#808285" stroke-width="1">
            <use href="#gridlines"/>
            <path d="M191 313L288 732M201 311L293 711M210 308L298 693M203 388L227 371M235 531L257 496M268 672L286 623"/>
            <path d="M319 706L702 620M314 725L713 636M310 746L726 653M383 683L378 742M511 665L520 710M635 627L661 677"/>
          </g>
          <use href="#secA" fill="url(#shade)"/>
          <use href="#secB" fill="url(#shade)"/>
          <path d="M265 509Q285 494 338 482L464 448L468 479Q380 498 300 512Q270 515 265 509Z" fill="#e0464b" fill-opacity=".75"/>
          <path d="M464 450L519 440L590 427L640 420Q662 417 668 421Q640 438 574 456L469 479Z" fill="#cb4b51"/>
          <use href="#gridlines" fill="none" stroke="#98181c" clip-path="url(#inside)"/>
          <path d="M265 509Q285 494 338 482L431 457M668 422Q640 439 574 456L520 467M265 512Q275 514 300 512Q380 498 468 480M464 450L590 427L640 420Q660 417 668 419" fill="none" stroke="#fb2a2e" stroke-width="1"/>
          <path d="M454 410Q432 416 422 431Q411 447 412 477L466 463Z" fill="#ef0c10"/>
          <path d="M459 430Q432 438 432 472L466 463Z" fill="#f50000"/>
          <path d="M466 463L520 452L521 467L469 479Z" fill="#cc1a1d"/>
          <path d="M466 463L501 456L500 472L469 479Z" fill="#c30d10"/>
          <path d="M469 479L521 467Q518 500 478 519Z" fill="#ef0c10"/>
          <path d="M469 479L500 472Q497 490 475 498Z" fill="#f50000"/>
          <path d="M421 262L511 665M412 477L520 452" stroke="#f51216" stroke-width="1.500"/>
          <g class="plot-text">
            <text x="81" y="286">×10<tspan class="sup" dy="-8">3</tspan><tspan dy="8"> mm</tspan></text>
            <text x="104" y="558">×10<tspan class="sup" dy="-8">3</tspan><tspan dy="8"> mm</tspan></text>
            <text x="499" y="781">×10<tspan class="sup" dy="-8">3</tspan><tspan dy="8"> mm</tspan></text>
            <text x="176" y="304">0</text><text x="168" y="400">-1</text><text x="207" y="543">0</text><text x="241" y="687">1</text>
            <text x="374" y="773">-1</text><text x="519" y="740">0</text><text x="663" y="709">1</text>
            <text x="114" y="723">x</text><text x="73" y="790">z</text>
          </g>
          <path d="M66 730L98 723" stroke="#d81b5c" stroke-width="3"/><path d="M109 721L95 719L97 727Z" fill="#d81b5c"/>
          <path d="M66 734L71 762" stroke="#4a86bd" stroke-width="3"/><path d="M74 774L67 762L76 760Z" fill="#4a86bd"/>
          <circle cx="66" cy="734" r="5" fill="#3f9a3a"/>
          <text class="plot-text" x="61" y="738">y</text>
        </svg>
      </div>
    </section>

    <section class="panel messages">
      <div class="tabs">
        <button class="tab active">消息 <svg class="close"><use href="#close"/></svg></button>
        <button class="tab">进度</button>
        <button class="tab">日志</button>
        <button class="tab">Evaluation 2D <svg class="close"><use href="#close"/></svg></button>
        <div class="panel-tools">
          <button class="bare" aria-label="菜单"><svg class="caret"><use href="#caret"/></svg></button>
          <button class="bare" aria-label="固定"><svg class="pin"><use href="#pin"/></svg></button>
        </div>
      </div>
      <button class="bare clear" aria-label="清除"><svg class="ico"><use href="#broom"/></svg></button>
      <div class="log">
        <p class="latin">COMSOL Multiphysics 5.6.0.280</p>
        <p><span class="latin">[2023-11-13 </span>上午<span class="latin">10:31] </span>打开的文件：<span class="latin">C:\Users\12824\Desktop\shanqvduich20231113.mph</span></p>
      </div>
    </section>
  </div>
</main>
<footer class="status">
  <span></span>
  <span>1.29 GB | 1.74 GB</span>
  <span class="watermark">CSDN @qq_42428839</span>
</footer>
</body>
</html>
```
FILE: styles.css
```css
:root {
  --line: #d4d5d8;
  --bg: #fafbff;
  --blue: #2b579a;
  --accent: #318ccf;
}

* { box-sizing: border-box; }

body {
  margin: 0;
  min-height: 100vh;
  display: flex;
  flex-direction: column;
  background: var(--bg);
  color: #000;
  font: 18px/26px "Open Sans", "Noto Sans CJK SC", sans-serif;
}

h1, h2, h3, p, ul { margin: 0; padding: 0; font-weight: 400; }
button, input, select { font: inherit; color: inherit; margin: 0; }
svg { display: block; flex: none; }

.sprite { position: absolute; width: 0; height: 0; }
.ico { width: 24px; height: 24px; }
.caret { width: 12px; height: 7px; color: #555; }
.pin { width: 12px; height: 16px; color: #555; }
.close { width: 14px; height: 14px; color: #cfd5e2; }
.open { width: 10px; height: 10px; }
.shut { width: 8px; height: 14px; }

.bare {
  display: flex;
  align-items: center;
  padding: 0;
  border: 0;
  background: none;
}

.workspace {
  flex: 1;
  display: grid;
  grid-template-columns: minmax(0, 543fr) minmax(0, 1007fr) minmax(0, 972fr);
  gap: 8px;
  padding-right: 1px;
}

.panel {
  display: flex;
  flex-direction: column;
  border: 2px solid var(--line);
  border-top: 0;
}

.panel-head {
  display: flex;
  justify-content: space-between;
  height: 45px;
  align-items: center;
}

.panel-title {
  font-size: 32px;
  line-height: 45px;
  font-weight: 100;
  color: var(--blue);
}

.panel-tools {
  display: flex;
  align-items: center;
  gap: 10px;
  margin-left: auto;
  padding-right: 4px;
}

.toolbar {
  display: flex;
  align-items: center;
  gap: 10px;
  height: 27px;
}

/* Model builder */
.builder { border-left: 0; }
.builder .toolbar { margin-bottom: 5px; }

.tree {
  flex: 1;
  list-style: none;
  margin: 0 5px 12px 0;
  border: 2px solid var(--line);
  border-left: 0;
  background: #fff;
}

.node {
  display: flex;
  align-items: center;
  height: 27px;
  padding-left: 4px;
  white-space: pre;
}

.node .twist { width: 24px; padding-left: 1px; }
.node .shut { margin-left: 2px; }
.node .ico { margin-right: 8px; }
.node em, .latin { font-size: 19px; }
.node em { padding-left: 5px; }
.l1 { padding-left: 34px; }
.l2 { padding-left: 64px; }
.l3 { padding-left: 94px; }
.off { color: #777; }

.selected { position: relative; background: #dadadc; }
.selected::after {
  content: "";
  position: absolute;
  inset: -2px -5px -4px 50px;
  border: 3px solid #ee1c23;
}

/* Tabs */
.tabs {
  display: flex;
  gap: 12px;
  align-items: flex-start;
  height: 40px;
  padding: 3px 0 0 6px;
  border-bottom: 2px solid var(--line);
}

.tab {
  display: flex;
  align-items: center;
  gap: 8px;
  height: 35px;
  padding: 0 10px 0 6px;
  border: 0;
  background: #ebebeb;
  font-size: 20px;
  white-space: pre;
}

.tab:not(:has(svg)) { padding: 0 6px; }

.tab.active {
  height: 37px;
  border: 2px solid var(--line);
  border-bottom: 0;
  background: var(--bg);
  color: var(--blue);
}

.tabs .panel-tools { height: 42px; }

/* Settings */
.settings { border-right-width: 1px; }

.node-title {
  padding: 12px 0 0 10px;
  font-size: 22px;
  line-height: 32px;
  font-weight: 100;
  color: var(--blue);
}

.plot { gap: 9px; height: 30px; padding-left: 13px; }
.plot-icon { width: 20px; height: 16px; }

.row {
  display: flex;
  align-items: center;
  padding: 0 7px 0 8px;
  white-space: nowrap;
}

.grow { flex: 1; min-width: 0; }

.field {
  height: 30px;
  min-width: 0;
  padding: 0 4px 2px;
  border: 2px solid var(--line);
  border-radius: 0;
  background: #fff;
  font-size: 18px;
}

.picker { position: relative; display: flex; }

.picker select {
  appearance: none;
  flex: 1;
  height: 31px;
  padding: 0 40px 0 19px;
  border: 1px solid #d2d3d5;
  border-radius: 3px;
  background: linear-gradient(#f0f0f1, #e8e8e8);
}

.picker::after {
  content: "";
  position: absolute;
  right: 10px;
  top: 13px;
  width: 10px;
  height: 6px;
  background: #000;
  clip-path: polygon(0 0, 100% 0, 50% 100%);
}

.square {
  display: flex;
  justify-content: center;
  width: 31px;
  height: 34px;
  margin-left: 12px;
  padding: 2px 0 0;
  border: 2px solid var(--line);
  border-radius: 4px;
  background: linear-gradient(#f2f2f3, #e9e9e9);
}

.section {
  display: flex;
  align-items: center;
  height: 39px;
  padding: 0 0 2px 8px;
  background: #dfe9f5;
  font-size: 20px;
}

.section .caret { margin-right: 19px; }
.section .shut { margin: 0 21px 0 2px; }

.label-row { padding-top: 16px; padding-bottom: 14px; }
.label-row label { width: 54px; }
.data-row { padding-top: 13px; padding-bottom: 16px; }
.data-row label { width: 73px; }
.axis-row { padding-top: 13px; padding-bottom: 10px; }
.axis-row label { width: 108px; }

.points {
  display: grid;
  grid-template-columns: 38px repeat(3, minmax(0, 1fr)) 34px;
  column-gap: 15px;
  row-gap: 9px;
  align-items: center;
  padding: 0 7px 16px 8px;
}

.points > span { height: 23px; line-height: 23px; }

.symmetry {
  display: flex;
  flex-direction: column;
  gap: 9px;
  padding: 13px 0 16px;
}

.symmetry label { width: 127px; }

.marked { position: relative; }
.marked::after {
  content: "";
  position: absolute;
  inset: 3px -3px -7px -9px;
  border: 3px solid #ee1c23;
}

/* Right column */
.side {
  display: flex;
  flex-direction: column;
  gap: 8px;
}

.graphics {
  flex: 1;
  border-color: #9bcffa;
  border-width: 0 1px 1px 2px;
}

.graphics .panel-title { padding-left: 12px; color: #1e90f0; }
.graphics .panel-tools .caret, .graphics .panel-tools .pin { color: var(--accent); }
.graphics .toolbar { padding-left: 12px; }

.split { gap: 10px; padding-right: 6px; }
.far { gap: 8px; padding-right: 17px; }
.wide { padding-right: 12px; }

.toggles { display: flex; gap: 7px; }

.toggle {
  display: flex;
  align-items: center;
  gap: 10px;
  height: 27px;
  padding: 0 1px;
  border: 2px solid var(--blue);
  border-radius: 4px;
  background: linear-gradient(#6b97d3, #bcdcf8 40%, #d2e9fd);
}

.toggle .ico { width: 21px; height: 21px; }
.toggle:first-child { padding-right: 6px; }

.canvas {
  position: relative;
  flex: 1;
  display: flex;
  min-height: 480px;
  margin-top: 8px;
  contain: size;
  background: linear-gradient(#fafbff, #e4f1ff);
}

.logo {
  position: absolute;
  top: 4px;
  right: 7px;
  width: 34px;
  height: 30px;
}

.plot3d { flex: 1; min-width: 0; height: 100%; }
.plot-text { font: 17px "DejaVu Sans", sans-serif; }
.plot-text .sup { font-size: 12px; }

.messages { height: 220px; border-top: 2px solid var(--line); }
.messages .tabs { height: 45px; padding-top: 8px; }
.messages .tabs .panel-tools { height: 44px; }
.clear { align-self: flex-start; height: 43px; padding: 9px 0 8px 12px; }

.log {
  flex: 1;
  margin: 0 5px 5px 6px;
  padding: 0 3px;
  border: 2px solid var(--line);
  line-height: 24px;
}

.status {
  display: grid;
  grid-template-columns: 3fr 1fr 1fr;
  align-items: center;
  height: 47px;
  padding: 12px 15px 0 0;
}

.watermark {
  color: #999;
  font: 17px/26px "Liberation Sans", sans-serif;
  justify-self: end;
}
```
